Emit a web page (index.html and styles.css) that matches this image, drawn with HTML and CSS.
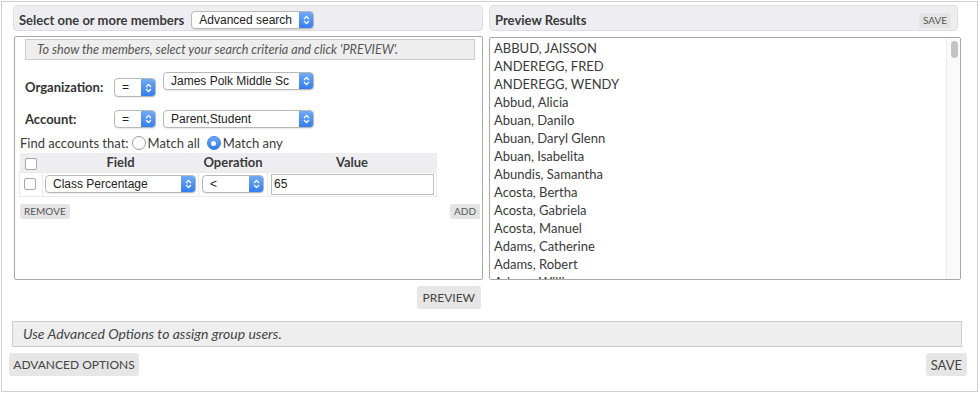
FILE: index.html
```html
<!DOCTYPE html>
<html>
<head>
<meta charset="utf-8">
<link rel="stylesheet" href="styles.css">
</head>
<body>
<div class="frame">
  <div class="top">
    <div class="col-left">
      <div class="head">
        <span class="title">Select one or more members</span>
        <span class="sel w-adv"><span class="sel-text">Advanced search</span><span class="sel-arrow"><svg width="7" height="10" viewBox="0 0 7 10"><path d="M1 4 L3.5 1.5 L6 4 M1 6 L3.5 8.5 L6 6" fill="none" stroke="#fff" stroke-width="1.3"/></svg></span></span>
      </div>
      <div class="box">
        <div class="hint">To show the members, select your search criteria and click 'PREVIEW'.</div>
        <div class="crit crit-org">
          <span class="lbl">Organization:</span>
          <span class="sel w-eq"><span class="sel-text">=</span><span class="sel-arrow"><svg width="7" height="10" viewBox="0 0 7 10"><path d="M1 4 L3.5 1.5 L6 4 M1 6 L3.5 8.5 L6 6" fill="none" stroke="#fff" stroke-width="1.3"/></svg></span></span>
          <span class="sel w-val"><span class="sel-text">James Polk Middle Sc</span><span class="sel-arrow"><svg width="7" height="10" viewBox="0 0 7 10"><path d="M1 4 L3.5 1.5 L6 4 M1 6 L3.5 8.5 L6 6" fill="none" stroke="#fff" stroke-width="1.3"/></svg></span></span>
        </div>
        <div class="crit crit-acc">
          <span class="lbl">Account:</span>
          <span class="sel w-eq"><span class="sel-text">=</span><span class="sel-arrow"><svg width="7" height="10" viewBox="0 0 7 10"><path d="M1 4 L3.5 1.5 L6 4 M1 6 L3.5 8.5 L6 6" fill="none" stroke="#fff" stroke-width="1.3"/></svg></span></span>
          <span class="sel w-val"><span class="sel-text">Parent,Student</span><span class="sel-arrow"><svg width="7" height="10" viewBox="0 0 7 10"><path d="M1 4 L3.5 1.5 L6 4 M1 6 L3.5 8.5 L6 6" fill="none" stroke="#fff" stroke-width="1.3"/></svg></span></span>
        </div>
        <div class="find">
          <span>Find accounts that:</span>
          <span class="radio"></span><span>Match all</span>
          <span class="radio on"></span><span>Match any</span>
        </div>
        <table class="rules">
          <colgroup><col class="c-chk"><col class="c-field"><col class="c-op"><col class="c-val"></colgroup>
          <thead>
            <tr><th><span class="chk chk-head"></span></th><th>Field</th><th>Operation</th><th>Value</th></tr>
          </thead>
          <tbody>
            <tr>
              <td><span class="chk"></span></td>
              <td><span class="sel w-field"><span class="sel-text">Class Percentage</span><span class="sel-arrow"><svg width="7" height="10" viewBox="0 0 7 10"><path d="M1 4 L3.5 1.5 L6 4 M1 6 L3.5 8.5 L6 6" fill="none" stroke="#fff" stroke-width="1.3"/></svg></span></span></td>
              <td><span class="sel w-op"><span class="sel-text">&lt;</span><span class="sel-arrow"><svg width="7" height="10" viewBox="0 0 7 10"><path d="M1 4 L3.5 1.5 L6 4 M1 6 L3.5 8.5 L6 6" fill="none" stroke="#fff" stroke-width="1.3"/></svg></span></span></td>
              <td><input class="val" type="text" value="65"></td>
            </tr>
          </tbody>
        </table>
        <div class="rule-actions">
          <button class="btn-sm">REMOVE</button>
          <button class="btn-sm">ADD</button>
        </div>
      </div>
    </div>
    <div class="col-right">
      <div class="head head-right">
        <span class="title">Preview Results</span>
        <button class="btn-sm">SAVE</button>
      </div>
      <div class="list">
        <div class="items">
          <div>ABBUD, JAISSON</div>
          <div>ANDEREGG, FRED</div>
          <div>ANDEREGG, WENDY</div>
          <div>Abbud, Alicia</div>
          <div>Abuan, Danilo</div>
          <div>Abuan, Daryl Glenn</div>
          <div>Abuan, Isabelita</div>
          <div>Abundis, Samantha</div>
          <div>Acosta, Bertha</div>
          <div>Acosta, Gabriela</div>
          <div>Acosta, Manuel</div>
          <div>Adams, Catherine</div>
          <div>Adams, Robert</div>
          <div>Adams, William</div>
        </div>
        <div class="track"><div class="thumb"></div></div>
      </div>
    </div>
  </div>
  <div class="preview-row"><button class="btn">PREVIEW</button></div>
  <div class="bar">Use Advanced Options to assign group users.</div>
  <div class="bottom">
    <button class="btn btn-adv">ADVANCED OPTIONS</button>
    <button class="btn">SAVE</button>
  </div>
</div>
</body>
</html>
```

FILE: styles.css
```css
* { box-sizing: border-box; }
body {
  margin: 0;
  background: #fff;
  font-family: Lato, "Open Sans", sans-serif;
  font-size: 13px;
  color: #3a3a3a;
}
.frame {
  margin: 1px 0 0 1px;
  width: 977px;
  height: 391px;
  border: 1px solid #cfcfcf;
  padding: 3px 5px 0 11px;
}
.top {
  display: grid;
  grid-template-columns: 470px 472px;
  column-gap: 6px;
}
.head {
  height: 26px;
  border: 1px solid #dddde2;
  background: #eeeef2;
  border-radius: 4px;
  display: flex;
  align-items: center;
  padding: 4px 0 0 5px;
}
.title {
  font-weight: bold;
  color: #3a3a3a;
}
.head .sel { margin-left: 7px; }
.head-right {
  margin-right: 3px;
  justify-content: space-between;
  padding-right: 6px;
}
.head-right .btn-sm { margin-top: 1px; }

/* select look-alike */
.sel {
  display: inline-flex;
  height: 18px;
  border: 1px solid #b8b8b8;
  border-radius: 4px;
  background: #fff;
  box-shadow: 0 1px 1px rgba(0,0,0,0.08);
  font-family: "Liberation Sans", Arial, sans-serif;
  font-size: 12px;
  color: #222;
  overflow: hidden;
}
.sel-text {
  flex: 1;
  padding-left: 7px;
  line-height: 16px;
  white-space: nowrap;
}
.sel-arrow {
  width: 15px;
  margin: -1px -1px -1px 0;
  background: linear-gradient(#74acf8, #2f7bef);
  display: flex;
  align-items: center;
  justify-content: center;
}
.w-adv { width: 123px; }
.w-eq { width: 42px; }
.w-val { width: 151px; }
.w-field { width: 151px; }
.w-op { width: 62px; }

.box {
  margin: 5px 0 0 1px;
  height: 244px;
  border: 1px solid #a8a8a8;
  border-radius: 2px;
}
.hint {
  margin: 2px 7px 0 10px;
  height: 21px;
  background: #eeeeee;
  border: 1px solid #cccccc;
  font-style: italic;
  font-size: 12.6px;
  color: #555;
  line-height: 19px;
  padding-left: 11px;
  white-space: nowrap;
}
.crit {
  display: flex;
  align-items: flex-start;
  padding-left: 10px;
}
.crit .lbl {
  width: 89px;
  font-weight: bold;
  color: #333;
  line-height: 16px;
}
.crit .w-eq { margin-right: 7px; }
.crit-org { margin-top: 12px; }
.crit-org .lbl { margin-top: 7px; }
.crit-org .w-eq { margin-top: 6px; height: 19px; }
.crit-acc { margin-top: 13px; }
.crit-acc .lbl { margin-top: 1px; }

.find {
  margin-top: 7px;
  padding-left: 5px;
  display: flex;
  align-items: center;
  line-height: 16px;
}
.radio {
  width: 14px;
  height: 14px;
  border-radius: 50%;
  border: 1px solid #9c9c9c;
  background: #fff;
  margin: 0 2px 0 3px;
}
.radio + span { margin-right: 4px; }
.radio.on {
  border-color: #3a7fe8;
  background: linear-gradient(#6fa9f6, #2f7bef);
  display: flex;
  align-items: center;
  justify-content: center;
}
.radio.on::after {
  content: "";
  width: 5px;
  height: 5px;
  border-radius: 50%;
  background: #fff;
}

.rules {
  margin: 2px 0 0 4px;
  width: 417px;
  border-collapse: collapse;
  table-layout: fixed;
}
.c-chk { width: 23px; }
.c-field { width: 156px; }
.c-op { width: 69px; }
.c-val { width: 169px; }
.rules th {
  background: #eeeef2;
  height: 19px;
  padding: 0;
  font-weight: bold;
  color: #3a3a3a;
  text-align: center;
  line-height: 17px;
}
.rules th:first-child { text-align: left; padding-left: 5px; }
.rules td {
  height: 24px;
  padding: 0 2px;
  border: 1px solid #eaeaea;
  vertical-align: middle;
}
.rules td:first-child { padding-left: 4px; }
.rules td:nth-child(3) { padding-left: 3px; }
.rules td .sel { display: flex; }
.chk {
  display: block;
  width: 12px;
  height: 12px;
  border: 1px solid #a8a8a8;
  border-radius: 2px;
  background: #fff;
}
.chk-head { margin-top: 3px; }
.val {
  display: block;
  width: 163px;
  height: 21px;
  border: 1px solid #bdbdbd;
  font-family: "Liberation Sans", Arial, sans-serif;
  font-size: 12px;
  color: #222;
  padding: 0 2px;
  margin-left: 1px;
}

.rule-actions {
  margin: 7px 2px 0 5px;
  display: flex;
  justify-content: space-between;
}
.btn-sm {
  height: 15px;
  padding: 0 4px;
  border: 0;
  border-radius: 2px;
  background: #e4e4e4;
  font-family: Lato, "Open Sans", sans-serif;
  font-size: 10px;
  color: #555;
  line-height: 15px;
}

.col-right { min-width: 0; }
.list {
  margin-top: 6px;
  height: 243px;
  border: 1px solid #a8a8a8;
  border-radius: 2px;
  display: flex;
  overflow: hidden;
}
.items {
  flex: 1;
  padding: 1px 0 0 4px;
  line-height: 18px;
  color: #3a3a3a;
  overflow: hidden;
}
.track {
  width: 14px;
  border-left: 1px solid #ececec;
  background: #fafafa;
  padding: 3px 0 0 4px;
}
.thumb {
  width: 7px;
  height: 17px;
  border-radius: 4px;
  background: #c3c3c3;
}

.preview-row {
  width: 470px;
  margin-top: 6px;
  display: flex;
  justify-content: flex-end;
  padding-right: 2px;
}
.btn {
  height: 23px;
  padding: 0 6px;
  border: 0;
  border-radius: 3px;
  background: #e6e6e6;
  font-family: Lato, "Open Sans", sans-serif;
  font-size: 12px;
  color: #444;
}
.bar {
  margin: 12px 0 0 -1px;
  width: 950px;
  height: 26px;
  background: #eeeeee;
  border: 1px solid #cccccc;
  font-style: italic;
  font-size: 14px;
  color: #444;
  line-height: 24px;
  padding-left: 10px;
}
.bottom {
  margin: 6px 0 0 -4px;
  width: 958px;
  display: flex;
  justify-content: space-between;
}
.bottom .btn { font-size: 13px; padding: 0 5px; }
.bottom .btn-adv { font-size: 12px; width: 130px; padding: 0; }
```
